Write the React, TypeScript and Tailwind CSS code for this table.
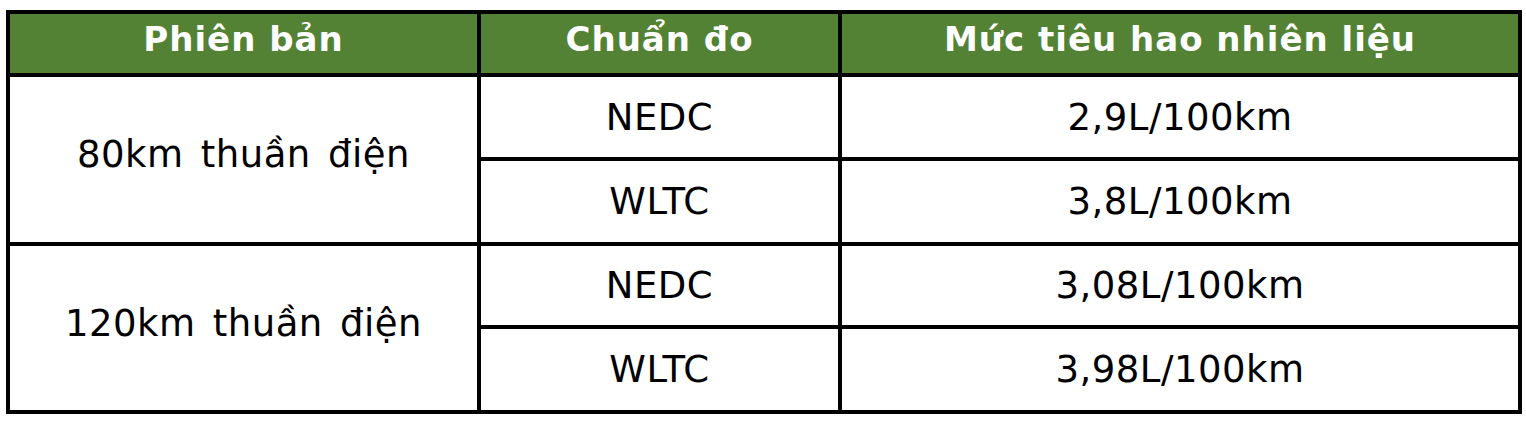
const rows = [
  {
    version: "80km thuần điện",
    items: [
      { standard: "NEDC", value: "2,9L/100km" },
      { standard: "WLTC", value: "3,8L/100km" },
    ],
  },
  {
    version: "120km thuần điện",
    items: [
      { standard: "NEDC", value: "3,08L/100km" },
      { standard: "WLTC", value: "3,98L/100km" },
    ],
  },
];

const head = "flex items-center justify-center bg-[#548235] pb-[10px] text-[34px] font-bold leading-none tracking-[1px] text-white";
const cell = "flex items-center justify-center bg-white text-[37px] leading-none tracking-[0.5px] [word-spacing:5px] text-black";

export default function App() {
  return (
    <div className="min-h-screen bg-white pt-[10px] pl-[6px]" style={{ fontFamily: '"DejaVu Sans", sans-serif' }}>
      <div className="grid w-[1516px] grid-cols-[467px_357px_676px] grid-rows-[59px_80px_81px_79px_81px] gap-[4px] bg-black p-[4px]">
        <div className={head}>Phiên bản</div>
        <div className={head}>Chuẩn đo</div>
        <div className={head}>Mức tiêu hao nhiên liệu</div>

        {rows.map((row, i) => (
          <div key={row.version} className="contents">
            <div className={`${cell} row-span-2 pb-[10px]`}>{row.version}</div>
            {row.items.map((item, j) => (
              <div key={`${i}-${j}`} className="contents">
                <div className={cell}>{item.standard}</div>
                <div className={cell}>{item.value}</div>
              </div>
            ))}
          </div>
        ))}
      </div>
    </div>
  );
}
